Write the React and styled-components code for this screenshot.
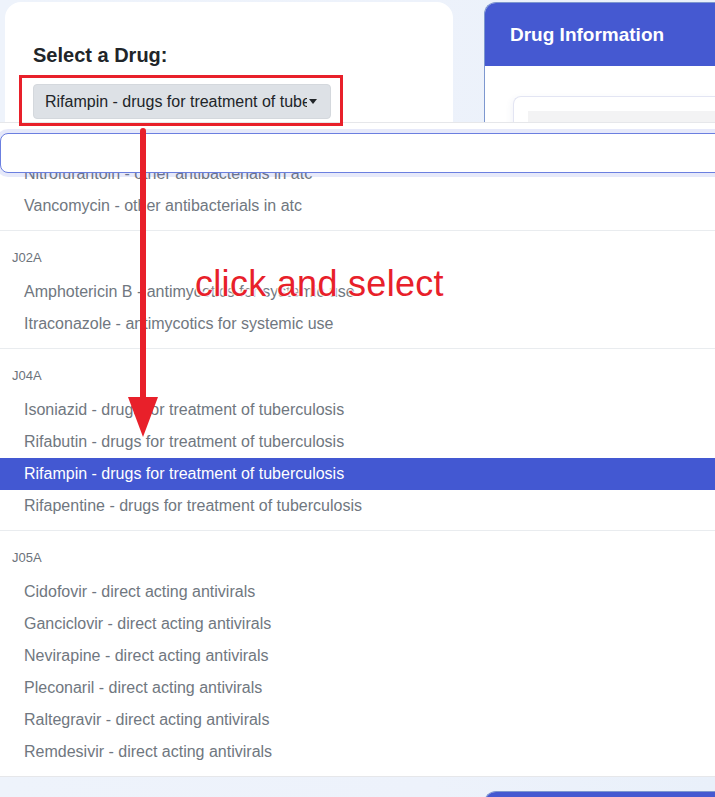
import React from 'react'
import styled, { createGlobalStyle } from 'styled-components'

const GlobalStyle = createGlobalStyle`
  html, body {
    margin: 0;
    height: 100%;
    overflow: hidden;
    background: linear-gradient(90deg, #eef3fb 0%, #edf2fb 60%, #e9f0fa 100%);
    font-family: "Liberation Sans", Arial, sans-serif;
  }
`;

const Page = styled.div`
  position: relative;
  display: grid;
  grid-template-columns: 448px 1fr;
  column-gap: 31px;
  padding: 2px 0 0 5px;
  height: 797px;
  box-sizing: border-box;
  overflow: hidden;
`;

const LeftCard = styled.div`
  background: #fff;
  border-radius: 16px;
  height: 740px;
  padding: 41px 28px;
  box-sizing: border-box;
`;

const Title = styled.h2`
  margin: 0 0 17px;
  font-size: 20px;
  line-height: 24px;
  font-weight: 700;
  color: #212529;
`;

const Toggle = styled.div`
  position: relative;
  width: 298px;
`;

const ToggleButton = styled.button`
  display: flex;
  align-items: center;
  width: 298px;
  height: 35px;
  padding: 5px 13px 5px 11px;
  box-sizing: border-box;
  background: #dde1e6;
  border: 1px solid #d4d8dd;
  border-radius: 4px;
  font-family: "Liberation Sans", Arial, sans-serif;
  font-size: 16px;
  line-height: 24px;
  color: #212529;

  &::after {
    content: "";
    margin-left: 2px;
    border-top: 5px solid #212529;
    border-left: 4px solid transparent;
    border-right: 4px solid transparent;
  }
`;

const ToggleText = styled.span`
  flex: 1;
  overflow: hidden;
  white-space: nowrap;
  text-align: left;
`;

const RedFrame = styled.div`
  position: absolute;
  top: -9px;
  left: -14px;
  width: 324px;
  height: 51px;
  box-sizing: border-box;
  border: 3px solid #e8202a;
  pointer-events: none;
  z-index: 8;
`;

const RightColumn = styled.div`
  display: flex;
  flex-direction: column;
  gap: 20px;
  min-width: 0;
  overflow: hidden;
`;

const InfoCard = styled.div`
  background: #fff;
  border: 1px solid #7d97cf;
  border-right: none;
  border-radius: 12px 0 0 0;
  height: ${p => p.$height}px;
  flex-shrink: 0;
  overflow: hidden;
`;

const CardHeader = styled.div`
  height: 63px;
  display: flex;
  align-items: center;
  padding-left: 25px;
  background: #4559d1;
  color: #fff;
  font-size: 19px;
  font-weight: 700;
`;

const CardBody = styled.div`
  padding: 30px 0 0 28px;
`;

const InnerPanel = styled.div`
  border: 1px solid #e3e5f3;
  border-right: none;
  border-radius: 8px 0 0 0;
  padding: 14px 0 0 14px;
  box-shadow: -2px 2px 6px rgba(60, 80, 160, 0.06);
`;

const GrayBlock = styled.div`
  height: 200px;
  background: #f3f3f4;
`;

const Menu = styled.div`
  position: absolute;
  top: 122px;
  left: 0;
  right: 0;
  height: 655px;
  box-sizing: border-box;
  background: #fff;
  border-top: 1px solid #e6e7ea;
  border-bottom: 1px solid #e6e7ea;
  display: flex;
  flex-direction: column;
  z-index: 5;
`;

const Search = styled.input`
  position: relative;
  z-index: 2;
  margin: 10px -20px 0 0;
  height: 40px;
  box-sizing: border-box;
  border: 1px solid #6b7fe0;
  border-radius: 8px;
  box-shadow: 0 0 0 4px rgba(80, 100, 220, 0.14);
  outline: none;
  background: #fff;
  flex-shrink: 0;
`;

const ScrollArea = styled.div`
  flex: 1;
  overflow: hidden;
`;

const List = styled.div`
  margin-top: ${p => -p.$scroll}px;
`;

const Item = styled.div`
  padding: 4px 24px;
  font-size: 16px;
  line-height: 24px;
  white-space: nowrap;
  color: ${p => (p.$active ? '#fff' : '#707780')};
  background: ${p => (p.$active ? '#4358d2' : 'transparent')};
`;

const Header = styled.div`
  padding: 8px 12px;
  font-size: 13px;
  line-height: 21px;
  color: #6c737b;
`;

const Divider = styled.hr`
  margin: 8px 0;
  border: 0;
  border-top: 1px solid #e9ecef;
  height: 0;
`;

const Arrow = styled.svg`
  position: absolute;
  left: 120px;
  top: 125px;
  z-index: 10;
`;

const Note = styled.div`
  position: absolute;
  left: 195px;
  top: 264px;
  z-index: 10;
  font-size: 36px;
  line-height: 40px;
  letter-spacing: 0.3px;
  color: #e8202a;
  white-space: nowrap;
  text-shadow: 0 0 2px #fff, 0 0 3px #fff, 1px 1px 2px #fff, -1px -1px 2px #fff;
`;

const groups = [
  { items: ['Nitrofurantoin - other antibacterials in atc', 'Vancomycin - other antibacterials in atc'] },
  { code: 'J02A', items: ['Amphotericin B - antimycotics for systemic use', 'Itraconazole - antimycotics for systemic use'] },
  {
    code: 'J04A',
    items: [
      'Isoniazid - drugs for treatment of tuberculosis',
      'Rifabutin - drugs for treatment of tuberculosis',
      'Rifampin - drugs for treatment of tuberculosis',
      'Rifapentine - drugs for treatment of tuberculosis',
    ],
  },
  {
    code: 'J05A',
    items: [
      'Cidofovir - direct acting antivirals',
      'Ganciclovir - direct acting antivirals',
      'Nevirapine - direct acting antivirals',
      'Pleconaril - direct acting antivirals',
      'Raltegravir - direct acting antivirals',
      'Remdesivir - direct acting antivirals',
    ],
  },
];

const selected = 'Rifampin - drugs for treatment of tuberculosis';

function App() {
  return (
    <>
      <GlobalStyle />
      <Page>
        <LeftCard>
          <Title>Select a Drug:</Title>
          <Toggle>
            <ToggleButton>
              <ToggleText>{selected}</ToggleText>
            </ToggleButton>
            <RedFrame />
          </Toggle>
        </LeftCard>

        <RightColumn>
          <InfoCard $height={767}>
            <CardHeader>Drug Information</CardHeader>
            <CardBody>
              <InnerPanel>
                <GrayBlock />
              </InnerPanel>
            </CardBody>
          </InfoCard>
          <InfoCard $height={60}>
            <CardHeader />
          </InfoCard>
        </RightColumn>

        <Menu>
          <Search type="text" />
          <ScrollArea>
            <List $scroll={15}>
              {groups.map((g, i) => (
                <React.Fragment key={i}>
                  {i > 0 && <Divider />}
                  {g.code && <Header>{g.code}</Header>}
                  {g.items.map(name => (
                    <Item key={name} $active={name === selected}>{name}</Item>
                  ))}
                </React.Fragment>
              ))}
            </List>
          </ScrollArea>
        </Menu>

        <Arrow width="50" height="320" viewBox="0 0 50 320">
          <line x1="23" y1="6" x2="23" y2="280" stroke="#e8202a" strokeWidth="6" strokeLinecap="round" />
          <polygon points="8,272 38,272 23,312" fill="#e8202a" />
        </Arrow>
        <Note>click and select</Note>
      </Page>
    </>
  )
}

export default App
